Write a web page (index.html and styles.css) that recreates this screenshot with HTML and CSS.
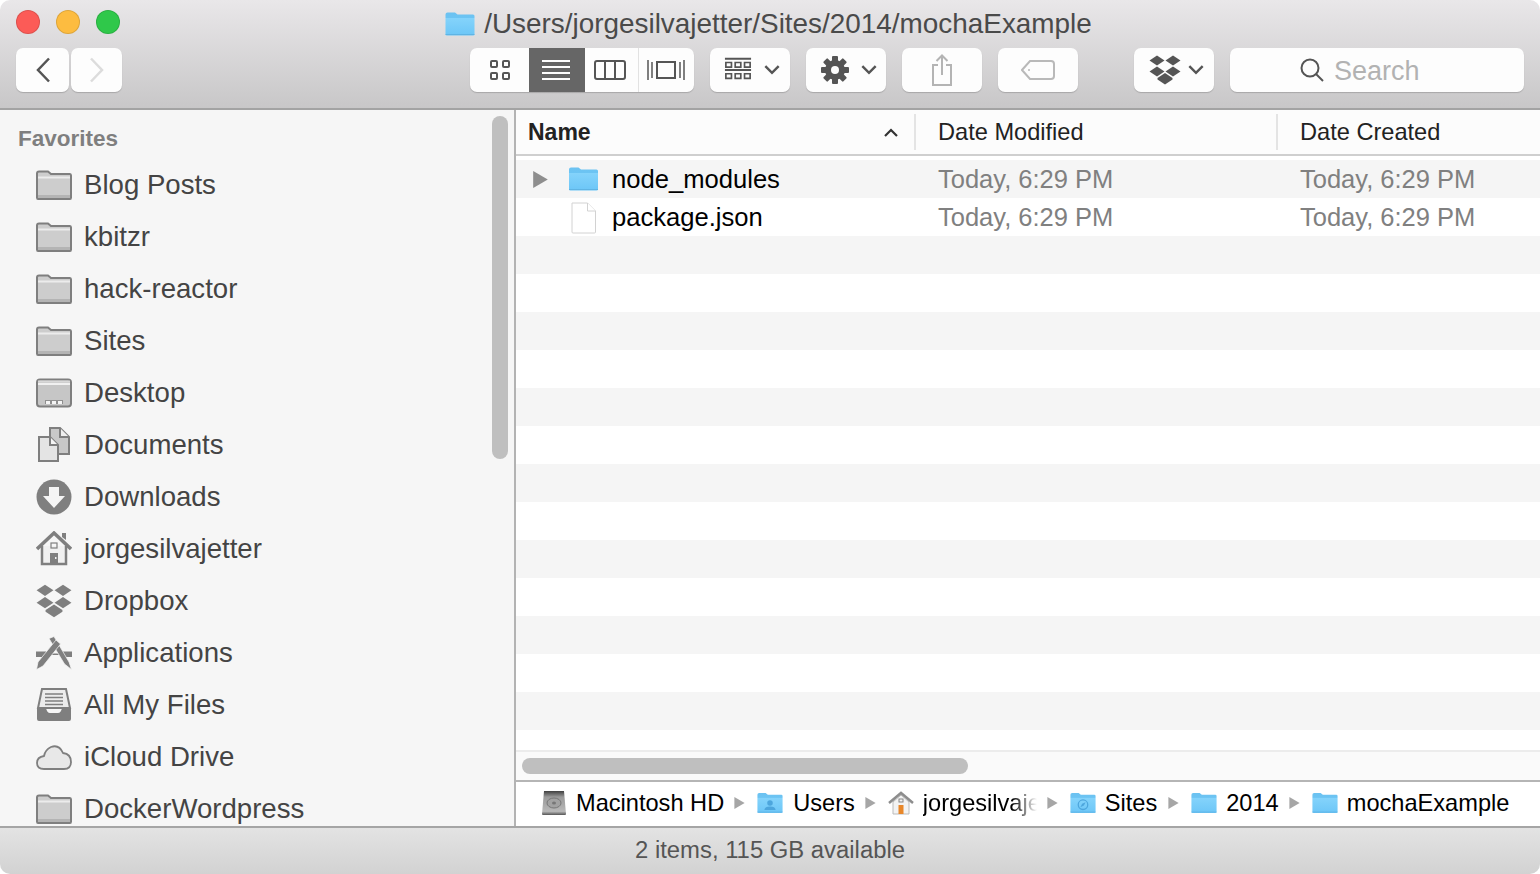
FILE: index.html
```html
<!DOCTYPE html>
<html lang="en">

<head>
    <meta charset="UTF-8">
    <meta name="viewport" content="width=device-width, initial-scale=1.0">
    <title>mochaExample</title>
    <link rel="stylesheet" href="styles.css">
</head>

<body>
    <svg class="sprite" xmlns="http://www.w3.org/2000/svg">
        <defs>
            <linearGradient id="blue" x1="0" y1="0" x2="0" y2="1">
                <stop offset="0" stop-color="#6cc2f1" />
                <stop offset="0.22" stop-color="#6cc4f3" />
                <stop offset="0.25" stop-color="#84d3fb" />
                <stop offset="1" stop-color="#6cc6f7" />
            </linearGradient>
            <linearGradient id="disk" x1="0" y1="0" x2="0" y2="1">
                <stop offset="0" stop-color="#3f3f3f" />
                <stop offset="0.25" stop-color="#9a9a9a" />
                <stop offset="0.85" stop-color="#b8b8b8" />
                <stop offset="1" stop-color="#555" />
            </linearGradient>
        </defs>
        <symbol id="folder-blue" viewBox="0 0 30 24">
            <path d="M.5 2.5Q.5 .5 2.5 .5H10L12.5 2.5H28Q29.5 2.5 29.5 4V22Q29.5 23.5 28 23.5H2Q.5 23.5 .5 22Z" fill="url(#blue)" />
            <path d="M.5 22.5H29.5" stroke="#5fb4e4" stroke-width="1" />
        </symbol>
        <symbol id="folder-users" viewBox="0 0 30 24">
            <use href="#folder-blue" width="30" height="24" />
            <circle cx="15" cy="12" r="3.200" fill="#4da6dd" />
            <path d="M8.500 20Q9 16 15 16Q21 16 21.500 20Z" fill="#4da6dd" />
        </symbol>
        <symbol id="folder-sites" viewBox="0 0 30 24">
            <use href="#folder-blue" width="30" height="24" />
            <circle cx="15" cy="14" r="5.500" fill="none" stroke="#4da6dd" stroke-width="1.500" />
            <path d="M18 11L16 15L12 17L14 13Z" fill="#4da6dd" />
        </symbol>
        <symbol id="folder-grey" viewBox="0 0 36 30">
            <path d="M1 3.500Q1 1.500 3 1.500H12L15 4H34Q35 4 35 5.500V27.500Q35 29 34 29H2Q1 29 1 27.500Z" fill="#cdcdcd" stroke="#7f7f7f" stroke-width="2" />
            <path d="M2 7.500H34" stroke="#ececec" stroke-width="2" />
            <path d="M2 26.500H34" stroke="#b4b4b4" stroke-width="3" />
        </symbol>
        <symbol id="desktop" viewBox="0 0 36 30">
            <rect x="1" y="1.500" width="34" height="27" rx="3" fill="#c6c6c6" stroke="#7f7f7f" stroke-width="2" />
            <path d="M2 6H34" stroke="#f0f0f0" stroke-width="2" />
            <path d="M2 3.500H34" stroke="#d8d8d8" stroke-width="2" />
            <path d="M9 26H27V22H9Z" fill="#8f8f8f" />
            <path d="M10 24.500H14M16 24.500H20M22 24.500H26" stroke="#f4f4f4" stroke-width="3" />
        </symbol>
        <symbol id="documents" viewBox="0 0 36 36">
            <path d="M14 1H24L33 10V27H14Z" fill="#c8c8c8" stroke="#7f7f7f" stroke-width="2" />
            <path d="M24 1V10H33" fill="#efefef" stroke="#7f7f7f" stroke-width="2" />
            <path d="M3 10H14L22 18V34H3Z" fill="#e4e4e4" stroke="#7f7f7f" stroke-width="2" />
            <path d="M14 10V18H22" fill="#f4f4f4" stroke="#7f7f7f" stroke-width="2" />
        </symbol>
        <symbol id="downloads" viewBox="0 0 36 36">
            <circle cx="18" cy="18" r="17.500" fill="#7f7f7f" />
            <path d="M13 8H23V17H29L18 29L7 17H13Z" fill="#f5f5f5" />
        </symbol>
        <symbol id="home" viewBox="0 2 36 36">
            <path d="M6 17V35H30V17" fill="#f0f0f0" stroke="#7f7f7f" stroke-width="2.500" />
            <path d="M1 20L18 4L35 20" fill="none" stroke="#7f7f7f" stroke-width="3.500" />
            <path d="M26 4H30V11L26 8Z" fill="#7f7f7f" />
            <rect x="15" y="14" width="6" height="5" fill="none" stroke="#7f7f7f" stroke-width="1.200" />
            <rect x="14" y="24" width="8" height="11" fill="#7f7f7f" />
            <rect x="19" y="28" width="1.500" height="2" fill="#f0f0f0" />
        </symbol>
        <symbol id="dropbox" viewBox="0 0 32 30">
            <path d="M8 .5L15.500 5.500L8 10.500L.5 5.500Z" />
            <path d="M24 .5L31.500 5.500L24 10.500L16.500 5.500Z" />
            <path d="M8 11.500L15.500 16.500L8 21.500L.5 16.500Z" />
            <path d="M24 11.500L31.500 16.500L24 21.500L16.500 16.500Z" />
            <path d="M16 18L23.500 23L23.500 24.500L16 29.500L8.500 24.500L8.500 23Z" />
        </symbol>
        <symbol id="applications" viewBox="0 0 36 34">
            <path d="M0 15.500H10V21H0ZM26 15.500H36V21H26ZM10 17.500H26V19H10Z" fill="#7f7f7f" />
            <path d="M13 2.500L18 .5L33 26L35.500 33.500L28.500 28Z" fill="#7f7f7f" stroke="#f6f6f6" stroke-width=".7" />
            <path d="M20 4L24.500 8L7 30L.5 33.500L2 26Z" fill="#7f7f7f" stroke="#f6f6f6" stroke-width=".7" />
        </symbol>
        <symbol id="files" viewBox="0 0 36 34">
            <path d="M6 1H30L34 20H2Z" fill="#ececec" stroke="#7f7f7f" stroke-width="2" />
            <path d="M9 6H27M9 9.500H27M9 13H27M9 16.500H27" stroke="#7f7f7f" stroke-width="1.500" />
            <path d="M1 20H10Q11 25 14 25H22Q25 25 26 20H35V31Q35 33 33 33H3Q1 33 1 31Z" fill="#7f7f7f" />
        </symbol>
        <symbol id="cloud" viewBox="0 0 36 26">
            <path d="M8 25Q1 25 1 19Q1 13 8 12Q9 6 15 3Q23 0 27 9Q35 10 35 18Q35 25 28 25Z" fill="#e8e8e8" stroke="#7f7f7f" stroke-width="1.800" />
        </symbol>
        <symbol id="chevron" viewBox="0 0 14 9">
            <path d="M1 1L7 7L13 1" fill="none" stroke="currentColor" stroke-width="2.200" />
        </symbol>
        <symbol id="tri" viewBox="0 0 12 14">
            <path d="M0 0L12 7L0 14Z" />
        </symbol>
    </svg>

    <div class="window">
        <header class="toolbar">
            <div class="titlebar">
                <div class="lights">
                    <span class="light red"></span>
                    <span class="light yellow"></span>
                    <span class="light green"></span>
                </div>
                <div class="title">
                    <svg class="title-icon"><use href="#folder-blue" /></svg>
                    <span>/Users/jorgesilvajetter/Sites/2014/mochaExample</span>
                </div>
            </div>
            <div class="tools">
                <div class="btn nav back">
                    <svg width="16" height="26" viewBox="0 0 16 26"><path d="M14 1.500L3 13L14 24.500" fill="none" stroke="#555" stroke-width="2.500" /></svg>
                </div>
                <div class="btn nav forward">
                    <svg width="16" height="26" viewBox="0 0 16 26"><path d="M2 1.500L13 13L2 24.500" fill="none" stroke="#dcdcdc" stroke-width="2.500" /></svg>
                </div>

                <div class="views">
                    <div class="view view-icons">
                        <svg width="22" height="20" viewBox="0 0 22 20" fill="none" stroke="#555" stroke-width="2">
                            <rect x="2" y="1" width="6" height="6" rx="1" />
                            <rect x="14" y="1" width="6" height="6" rx="1" />
                            <rect x="2" y="13" width="6" height="6" rx="1" />
                            <rect x="14" y="13" width="6" height="6" rx="1" />
                        </svg>
                    </div>
                    <div class="view view-list">
                        <svg width="30" height="22" viewBox="0 0 30 22" stroke="#fff" stroke-width="2">
                            <path d="M1 2H29M1 8H29M1 14H29M1 20H29" />
                        </svg>
                    </div>
                    <div class="view view-cols">
                        <svg width="32" height="20" viewBox="0 0 32 20" fill="none" stroke="#555" stroke-width="2">
                            <rect x="1" y="1" width="30" height="18" rx="2" />
                            <path d="M11 1V19M21 1V19" />
                        </svg>
                    </div>
                    <div class="view view-flow">
                        <svg width="38" height="22" viewBox="0 0 38 22" fill="none" stroke="#555" stroke-width="2">
                            <rect x="10" y="3" width="18" height="16" />
                            <path d="M1 1V21M5 3V19M33 3V19M37 1V21" stroke-width="1.500" />
                        </svg>
                    </div>
                </div>

                <div class="btn wide arrange">
                    <svg width="28" height="26" viewBox="0 0 30 26" fill="none" stroke="#555">
                        <path d="M1 1H29M1 13H29" stroke-width="2" />
                        <path d="M2 5H8V10H2ZM12 5H18V10H12ZM22 5H28V10H22ZM2 17H8V22H2ZM12 17H18V22H12ZM22 17H28V22H22Z" stroke-width="1.800" />
                    </svg>
                    <svg class="chevron"><use href="#chevron" /></svg>
                </div>
                <div class="btn wide gear">
                    <svg width="28" height="28" viewBox="0 0 28 28" fill="#555">
                        <circle cx="14" cy="14" r="10" />
                        <rect x="11" y="0" width="6" height="28" rx="1" />
                        <rect x="11" y="0" width="6" height="28" rx="1" transform="rotate(45 14 14)" />
                        <rect x="11" y="0" width="6" height="28" rx="1" transform="rotate(90 14 14)" />
                        <rect x="11" y="0" width="6" height="28" rx="1" transform="rotate(135 14 14)" />
                        <circle cx="14" cy="14" r="4" fill="#fdfdfd" />
                    </svg>
                    <svg class="chevron"><use href="#chevron" /></svg>
                </div>
                <div class="btn wide share">
                    <svg width="22" height="32" viewBox="0 0 22 32" fill="none" stroke="#b4b4b4" stroke-width="2">
                        <path d="M7 11H2V31H20V11H15" />
                        <path d="M11 21V2M5.500 7L11 1.500L16.500 7" />
                    </svg>
                </div>
                <div class="btn wide tag">
                    <svg width="34" height="20" viewBox="0 0 34 20" fill="none" stroke="#b9b9b9" stroke-width="2">
                        <path d="M9 1H30Q33 1 33 4V16Q33 19 30 19H9L1 10Z" />
                        <circle cx="8" cy="10" r="1" fill="#b9b9b9" stroke="none" />
                    </svg>
                </div>
                <div class="btn wide dbx">
                    <svg class="dbx-icon"><use href="#dropbox" /></svg>
                    <svg class="chevron"><use href="#chevron" /></svg>
                </div>
                <div class="search">
                    <svg width="24" height="24" viewBox="0 0 24 24" fill="none" stroke="#555" stroke-width="2">
                        <circle cx="10" cy="10" r="8.500" />
                        <path d="M16 16L23 23" />
                    </svg>
                    <span>Search</span>
                </div>
            </div>
        </header>

        <div class="content">
            <aside class="sidebar">
                <div class="side-head">Favorites</div>
                <div class="side-item"><svg class="side-icon"><use href="#folder-grey" /></svg>Blog Posts</div>
                <div class="side-item"><svg class="side-icon"><use href="#folder-grey" /></svg>kbitzr</div>
                <div class="side-item"><svg class="side-icon"><use href="#folder-grey" /></svg>hack-reactor</div>
                <div class="side-item"><svg class="side-icon"><use href="#folder-grey" /></svg>Sites</div>
                <div class="side-item"><svg class="side-icon"><use href="#desktop" /></svg>Desktop</div>
                <div class="side-item"><svg class="side-icon"><use href="#documents" /></svg>Documents</div>
                <div class="side-item"><svg class="side-icon"><use href="#downloads" /></svg>Downloads</div>
                <div class="side-item"><svg class="side-icon"><use href="#home" /></svg>jorgesilvajetter</div>
                <div class="side-item"><svg class="side-icon dbx-side"><use href="#dropbox" /></svg>Dropbox</div>
                <div class="side-item"><svg class="side-icon"><use href="#applications" /></svg>Applications</div>
                <div class="side-item"><svg class="side-icon"><use href="#files" /></svg>All My Files</div>
                <div class="side-item"><svg class="side-icon"><use href="#cloud" /></svg>iCloud Drive</div>
                <div class="side-item"><svg class="side-icon"><use href="#folder-grey" /></svg>DockerWordpress</div>
                <div class="side-scroll"></div>
            </aside>

            <main class="main">
                <div class="list-head">
                    <div class="col-name">Name
                        <svg class="sort" viewBox="0 0 14 9"><path d="M1 8L7 2L13 8" fill="none" stroke="#333" stroke-width="2.200" /></svg>
                    </div>
                    <div class="col-date">Date Modified</div>
                    <div class="col-date">Date Created</div>
                </div>
                <div class="rows">
                    <div class="row">
                        <div class="cell-name">
                            <svg class="disclosure"><use href="#tri" /></svg>
                            <svg class="file-icon"><use href="#folder-blue" /></svg>
                            <span>node_modules</span>
                        </div>
                        <div class="cell-date">Today, 6:29 PM</div>
                        <div class="cell-date">Today, 6:29 PM</div>
                    </div>
                    <div class="row">
                        <div class="cell-name">
                            <span class="no-disclosure"></span>
                            <svg class="file-icon doc" viewBox="0 0 26 32">
                                <path d="M1.500 1H17L25 9V30Q25 31 24 31H2.500Q1.500 31 1.500 30Z" fill="#fff" stroke="#d2d2d2" />
                                <path d="M17 1V9H25" fill="#fff" stroke="#d2d2d2" />
                            </svg>
                            <span>package.json</span>
                        </div>
                        <div class="cell-date">Today, 6:29 PM</div>
                        <div class="cell-date">Today, 6:29 PM</div>
                    </div>
                    <div class="row"></div>
                    <div class="row"></div>
                    <div class="row"></div>
                    <div class="row"></div>
                    <div class="row"></div>
                    <div class="row"></div>
                    <div class="row"></div>
                    <div class="row"></div>
                    <div class="row"></div>
                    <div class="row"></div>
                    <div class="row"></div>
                    <div class="row"></div>
                    <div class="row"></div>
                    <div class="row"></div>
                </div>
                <div class="hscroll"><div class="hthumb"></div></div>
                <div class="pathbar">
                    <svg class="path-icon hd" viewBox="0 0 26 26">
                        <path d="M3 1H23L25 24Q25 25 24 25H2Q1 25 1 24Z" fill="url(#disk)" />
                        <ellipse cx="13" cy="13" rx="7" ry="5" fill="#a2a2a2" stroke="#777" />
                        <ellipse cx="13" cy="13" rx="2" ry="1.500" fill="#777" />
                    </svg>
                    <span>Macintosh HD</span>
                    <svg class="path-sep"><use href="#tri" /></svg>
                    <svg class="path-icon users"><use href="#folder-users" /></svg>
                    <span>Users</span>
                    <svg class="path-sep"><use href="#tri" /></svg>
                    <svg class="path-icon home-color" viewBox="0 0 26 26">
                        <path d="M5 12V24H21V12L13 5Z" fill="#f3f3f3" stroke="#bbb" />
                        <path d="M1 13L13 3L25 13" fill="none" stroke="#8d8d8d" stroke-width="2.500" />
                        <rect x="10.500" y="15" width="5" height="9" fill="#e8872a" />
                        <rect x="11" y="9" width="4" height="3" fill="none" stroke="#888" />
                    </svg>
                    <span class="faded">jorgesilvajetter</span>
                    <svg class="path-sep"><use href="#tri" /></svg>
                    <svg class="path-icon"><use href="#folder-sites" /></svg>
                    <span class="sites">Sites</span>
                    <svg class="path-sep"><use href="#tri" /></svg>
                    <svg class="path-icon"><use href="#folder-blue" /></svg>
                    <span>2014</span>
                    <svg class="path-sep"><use href="#tri" /></svg>
                    <svg class="path-icon"><use href="#folder-blue" /></svg>
                    <span>mochaExample</span>
                </div>
            </main>
        </div>

        <footer class="status">2 items, 115 GB available</footer>
    </div>
</body>

</html>
```

FILE: styles.css
```css
html,
body {
    margin: 0;
    padding: 0;
    background: #fff;
}

body {
    font-family: "Liberation Sans", Arial, sans-serif;
    overflow: hidden;
}

.sprite {
    display: block;
    width: 0;
    height: 0;
}

.window {
    display: flex;
    flex-direction: column;
    width: 1540px;
    height: 874px;
    overflow: hidden;
    border-radius: 10px;
}

/* toolbar */
.toolbar {
    height: 108px;
    flex: none;
    background: linear-gradient(#e9e7e9, #c8c7c8);
    border-bottom: 2px solid #a3a3a3;
}

.titlebar {
    display: grid;
    grid-template-columns: 1fr auto 1fr;
    align-items: center;
    height: 48px;
}

.lights {
    display: flex;
    gap: 16px;
    padding: 0 0 4px 16px;
}

.light {
    width: 24px;
    height: 24px;
    box-sizing: border-box;
    border-radius: 50%;
    border: 1px solid rgba(0, 0, 0, 0.12);
}

.red {
    background: #fc5b57;
}

.yellow {
    background: #fdbc40;
}

.green {
    background: #2fc84a;
}

.title {
    display: flex;
    align-items: center;
    gap: 9px;
    padding: 0 3px 1px 0;
    font-size: 27.900px;
    color: #4a4a4a;
    white-space: nowrap;
}

.title-icon {
    width: 30px;
    height: 24px;
}

.tools {
    display: flex;
    padding-left: 16px;
}

.btn,
.views,
.search {
    height: 44px;
    background: #fdfdfd;
    border-radius: 7px;
    box-shadow: 0 1px 1px rgba(0, 0, 0, 0.18);
}

.btn {
    display: flex;
    align-items: center;
    justify-content: center;
}

.back {
    width: 53px;
}

.forward {
    width: 51px;
    margin-left: 2px;
}

.views {
    display: flex;
    margin-left: 348px;
    overflow: hidden;
}

.view {
    display: flex;
    align-items: center;
    justify-content: center;
    box-sizing: border-box;
}

.view-icons {
    width: 59px;
}

.view-list {
    width: 56px;
    padding-right: 2px;
    background: #666;
}

.view-cols {
    width: 53px;
    padding-right: 3px;
}

.view-flow {
    width: 56px;
    padding-right: 2px;
    border-left: 1px solid #e2e2e2;
}

.wide {
    width: 80px;
    margin-left: 16px;
    box-sizing: border-box;
}

.chevron {
    width: 16px;
    height: 10px;
    margin-left: 12px;
    color: #555;
}

.arrange {
    padding-left: 4px;
}

.gear {
    padding-left: 5px;
}

.dbx {
    margin-left: 56px;
    padding-left: 5px;
}

.dbx .chevron {
    margin-left: 7px;
}

.dbx-icon {
    width: 32px;
    height: 30px;
    fill: #555;
}

.search {
    display: flex;
    align-items: center;
    gap: 10px;
    width: 294px;
    margin-left: 16px;
    padding-left: 70px;
    box-sizing: border-box;
    font-size: 27px;
    color: #b2b2b2;
}

.search span {
    padding-top: 2px;
}

/* body of the window */
.content {
    flex: 1;
    display: flex;
    min-height: 0;
}

.sidebar {
    position: relative;
    width: 514px;
    flex: none;
    overflow: hidden;
    background: #f6f6f6;
    border-right: 2px solid #b3b3b3;
}

.side-head {
    height: 33px;
    padding: 16px 0 0 18px;
    font-size: 22.500px;
    font-weight: bold;
    line-height: 26px;
    color: #7f7f7f;
}

.side-item {
    display: flex;
    align-items: center;
    gap: 12px;
    height: 52px;
    padding-left: 36px;
    font-size: 27.600px;
    color: #444;
    white-space: nowrap;
}

.side-icon {
    width: 36px;
    height: 36px;
    flex: none;
    fill: #7f7f7f;
}

.side-scroll {
    position: absolute;
    top: 6px;
    left: 492px;
    width: 16px;
    height: 343px;
    border-radius: 8px;
    background: #bfbfbf;
}

.main {
    flex: 1;
    display: flex;
    flex-direction: column;
    min-width: 0;
    background: #fff;
}

.list-head {
    display: grid;
    grid-template-columns: 398px 362px 1fr;
    align-items: center;
    height: 44px;
    flex: none;
    font-size: 23.600px;
    color: #222;
    background: #fcfcfc;
    border-bottom: 2px solid #cfcfcf;
}

.col-name {
    display: flex;
    align-items: center;
    justify-content: space-between;
    padding: 0 16px 0 12px;
    font-size: 23px;
    font-weight: bold;
}

.col-date {
    height: 36px;
    line-height: 36px;
    padding-left: 22px;
    border-left: 2px solid #e4e4e4;
}

.sort {
    width: 14px;
    height: 9px;
}

.rows {
    flex: 1;
    min-height: 0;
    overflow: hidden;
    margin-top: 4px;
    border-bottom: 2px solid #ececec;
}

.row {
    display: grid;
    grid-template-columns: 399px 362px 1fr;
    align-items: center;
    height: 38px;
}

.row:nth-child(odd) {
    background: #f5f5f5;
}

.cell-name {
    display: flex;
    align-items: center;
    padding-left: 17px;
    font-size: 25.600px;
    color: #000;
}

.disclosure,
.no-disclosure {
    width: 15px;
    height: 17px;
    flex: none;
    fill: #8e8e8e;
}

.file-icon {
    width: 31px;
    height: 24px;
    flex: none;
    margin: 0 13px 0 20px;
}

.doc {
    height: 32px;
    margin-top: 2px;
}

.cell-date {
    padding-left: 23px;
    font-size: 25.500px;
    color: #808080;
}

.hscroll {
    height: 30px;
    flex: none;
    padding-top: 6px;
    box-sizing: border-box;
    background: #fafafa;
    border-bottom: 2px solid #b5b5b5;
}

.hthumb {
    width: 446px;
    height: 16px;
    margin-left: 6px;
    border-radius: 8px;
    background: #bfbfbf;
}

.pathbar {
    display: flex;
    align-items: center;
    height: 44px;
    flex: none;
    box-sizing: border-box;
    padding: 0 0 2px 25px;
    font-size: 23.600px;
    color: #000;
    white-space: nowrap;
    overflow: hidden;
}

.path-icon {
    width: 26px;
    height: 22px;
    flex: none;
    margin: 0 9px 0 0;
}

.users {
    margin-right: 10px;
}

.hd,
.home-color {
    height: 26px;
}

.path-sep {
    width: 11px;
    height: 12px;
    flex: none;
    margin: 0 12px 0 10px;
    fill: #a6a6a6;
}

.faded {
    width: 114px;
    overflow: hidden;
    -webkit-mask-image: linear-gradient(to right, #000 78%, transparent);
    mask-image: linear-gradient(to right, #000 78%, transparent);
}

.sites {
    margin-right: 1px;
}

.status {
    height: 46px;
    flex: none;
    line-height: 44px;
    text-align: center;
    font-size: 23.850px;
    color: #555;
    background: linear-gradient(#e3e3e3, #d2d2d2);
    border-top: 2px solid #a5a5a5;
}
```
